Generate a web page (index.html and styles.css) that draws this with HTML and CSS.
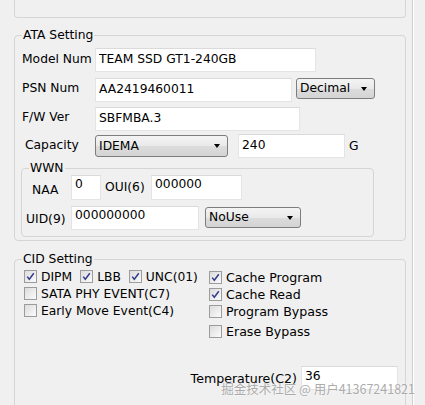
FILE: index.html
```html
<!DOCTYPE html>
<html>
<head>
  <title>Drive Settings</title>
  <link rel="stylesheet" href="styles.css">
</head>
<body>
  <div class="window">
    <div class="panel">
      <div class="group-top"></div>

      <!-- ATA -->
      <fieldset class="group ata">
        <legend>ATA Setting</legend>
        <div class="row row-model">
          <label class="lbl">Model Num</label>
          <input class="field w-model" value="TEAM SSD GT1-240GB">
        </div>
        <div class="row row-psn">
          <label class="lbl">PSN Num</label>
          <input class="field w-psn" value="AA2419460011">
          <div class="combo w-decimal">Decimal<span class="arrow"></span></div>
        </div>
        <div class="row row-fw">
          <label class="lbl">F/W Ver</label>
          <input class="field w-fw" value="SBFMBA.3">
        </div>
        <div class="row row-cap">
          <label class="lbl lbl-cap">Capacity</label>
          <div class="combo w-idema">IDEMA<span class="arrow"></span></div>
          <input class="field w-cap" value="240">
          <span class="unit">G</span>
        </div>

        <fieldset class="group wwn">
          <legend>WWN</legend>
          <div class="row row-naa">
            <label class="lbl-naa">NAA</label>
            <input class="field w-naa" value="0">
            <label class="lbl-oui">OUI(6)</label>
            <input class="field w-oui" value="000000">
          </div>
          <div class="row row-uid">
            <label class="lbl-uid">UID(9)</label>
            <input class="field w-uid" value="000000000">
            <div class="combo w-nouse">NoUse<span class="arrow"></span></div>
          </div>
        </fieldset>
      </fieldset>

      <!-- CID -->
      <fieldset class="group cid">
        <legend>CID Setting</legend>
        <div class="cid-cols">
          <div class="col col-left">
            <div class="check-row">
              <span class="check on"></span><span class="check-text">DIPM</span>
              <span class="check on gap-l"></span><span class="check-text">LBB</span>
              <span class="check on gap-l"></span><span class="check-text">UNC(01)</span>
            </div>
            <div class="check-row">
              <span class="check"></span><span class="check-text">SATA PHY EVENT(C7)</span>
            </div>
            <div class="check-row">
              <span class="check"></span><span class="check-text">Early Move Event(C4)</span>
            </div>
          </div>
          <div class="col col-right">
            <div class="check-row">
              <span class="check on"></span><span class="check-text">Cache Program</span>
            </div>
            <div class="check-row">
              <span class="check on"></span><span class="check-text">Cache Read</span>
            </div>
            <div class="check-row">
              <span class="check"></span><span class="check-text">Program Bypass</span>
            </div>
            <div class="check-row last">
              <span class="check"></span><span class="check-text">Erase Bypass</span>
            </div>
          </div>
        </div>
        <div class="row row-temp">
          <label class="lbl-temp">Temperature(C2)</label>
          <input class="field w-temp" value="36">
        </div>
      </fieldset>
    </div>
    <div class="rail"></div>
  </div>

  <div class="watermark">掘金技术社区 @ 用户41367241821</div>
</body>
</html>
```

FILE: styles.css
```css
* {
  box-sizing: border-box;
}

body {
  margin: 0;
  background-color: #f0f0f0;
  color: #000000;
  font-family: "DejaVu Sans", Verdana, sans-serif;
  font-size: 12.3px;
  overflow: hidden;
}

.window {
  display: flex;
  height: 405px;
}

.panel {
  margin-left: 14px;
  width: 392px;
}

.rail {
  margin-left: 6px;
  width: 2px;
  border-left: 1px solid #cfcfcf;
  border-right: 1px solid #ffffff;
}

/* Group boxes */
.group-top {
  height: 18px;
  border: 1px solid #d5d5d5;
  border-top: none;
  border-radius: 0 0 4px 4px;
}

.group {
  margin: 0;
  border: 1px solid #d5d5d5;
  border-radius: 4px;
  min-width: 0;
}

.group legend {
  padding: 0 1px;
  line-height: 16px;
}

.ata {
  margin-top: 9px;
  padding: 5px 6px 3px 7px;
}

.cid {
  margin-top: 10px;
  padding: 1px 6px 30px 7px;
}

.wwn {
  margin: 3px 0 0 -1px;
  width: 353px;
  padding: 0 6px 6px 7px;
}

.wwn legend {
  line-height: 14px;
}

/* Rows */
.row {
  display: flex;
  align-items: center;
  height: 24px;
}

.row-psn { margin-top: 6px; }
.row-fw { margin-top: 5px; }
.row-cap { margin-top: 3px; }
.row-uid { margin-top: 6px; }

.lbl {
  width: 73px;
  margin-top: -2px;
}

.lbl-cap {
  padding-left: 3px;
}

.row-psn .lbl,
.row-fw .lbl {
  margin-top: -5px;
}

/* Text fields */
.field {
  height: 24px;
  padding: 0 3px 3px;
  border: 1px solid #e4e4e4;
  border-top-color: #dadada;
  background: #ffffff;
  font-family: inherit;
  font-size: inherit;
  color: #000000;
  outline: none;
}

.w-model { width: 221px; }
.w-psn { width: 197px; }
.w-fw { width: 205px; }
.w-cap { width: 107px; margin-left: 10px; }
.w-naa { width: 30px; height: 25px; padding-bottom: 8px; }
.w-oui { width: 91px; height: 25px; padding-bottom: 8px; }
.w-uid { width: 128px; padding-bottom: 6px; }
.w-temp { width: 97px; padding-bottom: 4px; }

.unit {
  margin-left: 4px;
}

/* Combo boxes */
.combo {
  position: relative;
  height: 21px;
  line-height: 19px;
  padding-left: 3px;
  border: 1px solid #7d7d7d;
  border-radius: 3px;
  background: linear-gradient(#f4f4f4, #e9e9e9 50%, #dcdcdc 51%, #d4d4d4);
}

.arrow {
  position: absolute;
  right: 7px;
  top: 8px;
  border-left: 3.5px solid transparent;
  border-right: 3.5px solid transparent;
  border-top: 4px solid #000000;
}

.w-decimal {
  width: 79px;
  margin-left: 4px;
  align-self: flex-start;
}

.w-idema {
  width: 133px;
  height: 22px;
  align-self: flex-start;
  margin-top: 1px;
  line-height: 20px;
}

.w-nouse {
  width: 96px;
  margin-left: 6px;
  align-self: flex-start;
  margin-top: 1px;
}

/* WWN labels */
.row-naa {
  height: 25px;
}

.lbl-naa {
  width: 42px;
  padding-left: 3px;
  margin-top: 5px;
}

.lbl-oui {
  width: 50px;
  padding-left: 4px;
  margin-top: -2px;
}

.lbl-uid {
  width: 45px;
  margin-left: -3px;
  margin-top: 2px;
}

/* CID checkboxes */
.cid-cols {
  display: flex;
}

.col-left {
  margin-left: 2px;
  width: 185px;
  flex-shrink: 0;
}

.col-right {
  margin-top: 1px;
}

.check-row {
  display: flex;
  align-items: center;
  height: 17px;
}

.check-row.last {
  margin-top: 3px;
}

.col-right .check-row {
  font-size: 12.6px;
}

.check {
  width: 13px;
  height: 13px;
  border: 1px solid #9c9c9c;
  background: linear-gradient(135deg, #dcdcdc, #fbfbfb);
  flex-shrink: 0;
}

.check.on {
  background-image:
    url("data:image/svg+xml;utf8,<svg xmlns='http://www.w3.org/2000/svg' viewBox='0 0 11 11'><path d='M2.2 5.6 L4.3 8.2 L8.8 2.2' fill='none' stroke='%23313c8c' stroke-width='1.5'/></svg>"),
    linear-gradient(135deg, #dcdcdc, #fbfbfb);
}

.check-text {
  margin-left: 4px;
}

.gap-l {
  margin-left: 8px;
}

/* Temperature */
.row-temp {
  justify-content: flex-end;
  margin-top: 26px;
  margin-right: 1px;
}

.lbl-temp {
  margin-right: 4px;
  margin-top: 1px;
  font-size: 12.6px;
}

.watermark {
  position: absolute;
  right: 10px;
  top: 379px;
  font-family: "Noto Sans CJK SC", sans-serif;
  font-size: 12.5px;
  color: rgba(150, 150, 150, 0.8);
  text-shadow: 0 0 2px #ffffff;
}
```
